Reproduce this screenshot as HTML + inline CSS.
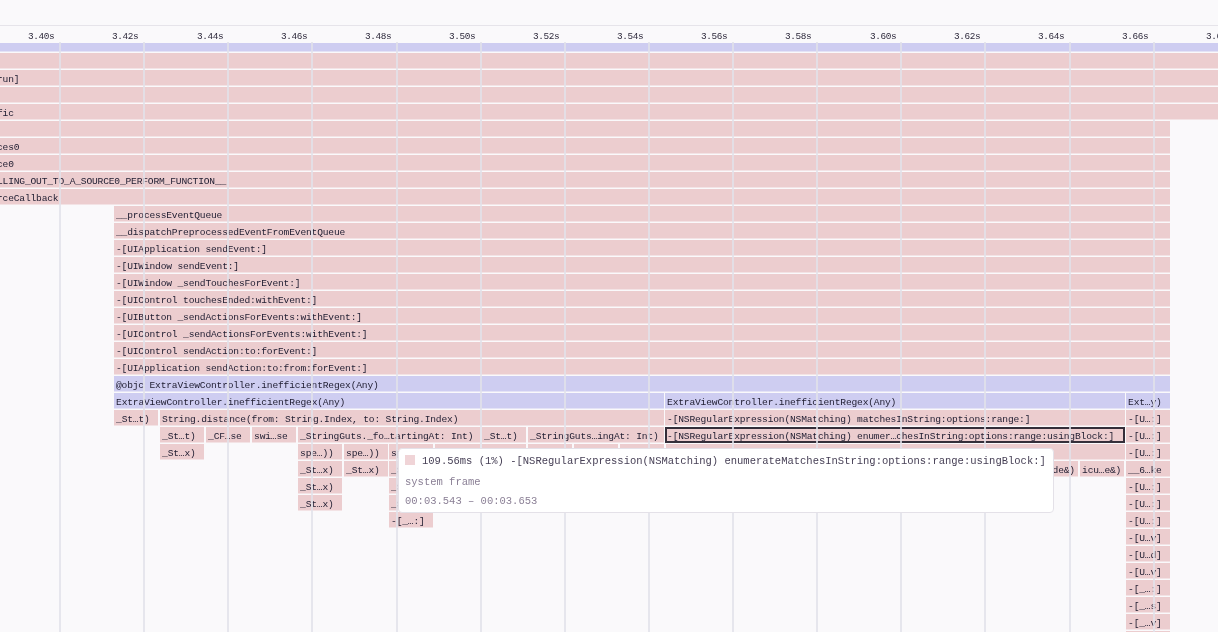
<!DOCTYPE html><html><head><meta charset="utf-8"><style>
*{margin:0;padding:0;box-sizing:border-box}
html,body{width:1218px;height:632px;overflow:hidden;background:#faf9fb}
body{position:relative;font-family:"Liberation Mono",monospace}
.bb{position:absolute;height:15px}
.b{position:absolute;height:15px;overflow:hidden;white-space:pre;font-size:9.6px;letter-spacing:-0.17px;line-height:15px;color:#1e1c30;z-index:6;will-change:transform}
.b span{position:absolute;top:1.5px;left:2.1px}
.p{background:rgb(236,205,207);box-shadow:0 1px 0 rgba(236,205,207,0.5)}
.bl{background:rgb(206,205,241);box-shadow:0 1px 0 rgba(206,205,241,0.5)}
.g{position:absolute;top:42px;height:590px;width:2px;background:rgba(226,226,233,0.82);z-index:7}
.ax{position:absolute;top:28.5px;height:16px;font-size:9.4px;letter-spacing:-0.4px;line-height:16px;color:#2f2b3d;white-space:pre;will-change:transform}
.t{position:absolute;z-index:6;will-change:transform;white-space:pre;font-size:9.6px;letter-spacing:-0.17px;line-height:15px;color:#1e1c30}
</style></head><body>
<div style="position:absolute;left:0;top:25px;width:1218px;height:1px;background:#e6e4ea"></div>
<div class="bb bl" style="left:-10px;top:43px;width:1238px;height:8px"></div>
<div class="bb p" style="left:-10px;top:53px;width:1238px;height:15px"></div>
<div class="bb p" style="left:-10px;top:70px;width:1238px;height:15px"></div>
<div class="bb p" style="left:-10px;top:87px;width:1238px;height:15px"></div>
<div class="bb p" style="left:-10px;top:104px;width:1238px;height:15px"></div>
<div class="bb p" style="left:-10px;top:121px;width:1180px;height:15px"></div>
<div class="bb p" style="left:-10px;top:138px;width:1180px;height:15px"></div>
<div class="bb p" style="left:-10px;top:155px;width:1180px;height:15px"></div>
<div class="bb p" style="left:-10px;top:172px;width:1180px;height:15px"></div>
<div class="bb p" style="left:-10px;top:189px;width:1180px;height:15px"></div>
<div class="bb p" style="left:114px;top:206px;width:1056px;height:15px"></div>
<div class="bb p" style="left:114px;top:223px;width:1056px;height:15px"></div>
<div class="bb p" style="left:114px;top:240px;width:1056px;height:15px"></div>
<div class="bb p" style="left:114px;top:257px;width:1056px;height:15px"></div>
<div class="bb p" style="left:114px;top:274px;width:1056px;height:15px"></div>
<div class="bb p" style="left:114px;top:291px;width:1056px;height:15px"></div>
<div class="bb p" style="left:114px;top:308px;width:1056px;height:15px"></div>
<div class="bb p" style="left:114px;top:325px;width:1056px;height:15px"></div>
<div class="bb p" style="left:114px;top:342px;width:1056px;height:15px"></div>
<div class="bb p" style="left:114px;top:359px;width:1056px;height:15px"></div>
<div class="bb bl" style="left:114px;top:376px;width:1056px;height:15px"></div>
<div class="bb bl" style="left:114px;top:393px;width:550px;height:15px"></div>
<div class="b" style="left:114px;top:393px;width:550px;height:15px"><span>ExtraViewController.inefficientRegex(Any)</span></div>
<div class="bb bl" style="left:665px;top:393px;width:459.5px;height:15px"></div>
<div class="b" style="left:665px;top:393px;width:459.5px;height:15px"><span>ExtraViewController.inefficientRegex(Any)</span></div>
<div class="bb bl" style="left:1126px;top:393px;width:44px;height:15px"></div>
<div class="b" style="left:1126px;top:393px;width:44px;height:15px"><span>Ext…y)</span></div>
<div class="bb p" style="left:114px;top:410px;width:43.69999999999999px;height:15px"></div>
<div class="b" style="left:114px;top:410px;width:43.69999999999999px;height:15px"><span>_St…t)</span></div>
<div class="bb p" style="left:159.9px;top:410px;width:504.1px;height:15px"></div>
<div class="b" style="left:159.9px;top:410px;width:504.1px;height:15px"><span>String.distance(from: String.Index, to: String.Index)</span></div>
<div class="bb p" style="left:665px;top:410px;width:459.5px;height:15px"></div>
<div class="b" style="left:665px;top:410px;width:459.5px;height:15px"><span>-[NSRegularExpression(NSMatching) matchesInString:options:range:]</span></div>
<div class="bb p" style="left:1126px;top:410px;width:44px;height:15px"></div>
<div class="b" style="left:1126px;top:410px;width:44px;height:15px"><span>-[U…:]</span></div>
<div class="bb p" style="left:159.9px;top:427px;width:43.79999999999998px;height:15px"></div>
<div class="b" style="left:159.9px;top:427px;width:43.79999999999998px;height:15px"><span>_St…t)</span></div>
<div class="bb p" style="left:205.7px;top:427px;width:44.0px;height:15px"></div>
<div class="b" style="left:205.7px;top:427px;width:44.0px;height:15px"><span>_CF…se</span></div>
<div class="bb p" style="left:251.6px;top:427px;width:44.00000000000003px;height:15px"></div>
<div class="b" style="left:251.6px;top:427px;width:44.00000000000003px;height:15px"><span>swi…se</span></div>
<div class="bb p" style="left:297.5px;top:427px;width:182.2px;height:15px"></div>
<div class="b" style="left:297.5px;top:427px;width:182.2px;height:15px"><span>_StringGuts._fo…tartingAt: Int)</span></div>
<div class="bb p" style="left:481.6px;top:427px;width:44.299999999999955px;height:15px"></div>
<div class="b" style="left:481.6px;top:427px;width:44.299999999999955px;height:15px"><span>_St…t)</span></div>
<div class="bb p" style="left:528.2px;top:427px;width:135.69999999999993px;height:15px"></div>
<div class="b" style="left:528.2px;top:427px;width:135.69999999999993px;height:15px"><span>_StringGuts…ingAt: Int)</span></div>
<div class="bb p" style="left:665px;top:427px;width:459.5px;height:15px"></div>
<div class="b" style="left:665px;top:427px;width:459.5px;height:15px"><span>-[NSRegularExpression(NSMatching) enumer…chesInString:options:range:usingBlock:]</span></div>
<div class="bb p" style="left:1126px;top:427px;width:44px;height:15px"></div>
<div class="b" style="left:1126px;top:427px;width:44px;height:15px"><span>-[U…:]</span></div>
<div class="bb p" style="left:159.9px;top:444px;width:43.79999999999998px;height:15px"></div>
<div class="b" style="left:159.9px;top:444px;width:43.79999999999998px;height:15px"><span>_St…x)</span></div>
<div class="bb p" style="left:297.5px;top:444px;width:44.10000000000002px;height:15px"></div>
<div class="b" style="left:297.5px;top:444px;width:44.10000000000002px;height:15px"><span>spe…))</span></div>
<div class="bb p" style="left:343.5px;top:444px;width:44.10000000000002px;height:15px"></div>
<div class="b" style="left:343.5px;top:444px;width:44.10000000000002px;height:15px"><span>spe…))</span></div>
<div class="bb p" style="left:389.2px;top:444px;width:44.19999999999999px;height:15px"></div>
<div class="b" style="left:389.2px;top:444px;width:44.19999999999999px;height:15px"><span>spe…))</span></div>
<div class="bb p" style="left:435.3px;top:444px;width:44.69999999999999px;height:15px"></div>
<div class="bb p" style="left:482px;top:444px;width:44px;height:15px"></div>
<div class="bb p" style="left:528px;top:444px;width:44px;height:15px"></div>
<div class="bb p" style="left:574px;top:444px;width:44px;height:15px"></div>
<div class="bb p" style="left:620px;top:444px;width:44px;height:15px"></div>
<div class="bb p" style="left:666px;top:444px;width:458.5px;height:15px"></div>
<div class="bb p" style="left:1126px;top:444px;width:44px;height:15px"></div>
<div class="b" style="left:1126px;top:444px;width:44px;height:15px"><span>-[U…:]</span></div>
<div class="bb p" style="left:297.5px;top:461px;width:44.10000000000002px;height:15px"></div>
<div class="b" style="left:297.5px;top:461px;width:44.10000000000002px;height:15px"><span>_St…x)</span></div>
<div class="bb p" style="left:343.5px;top:461px;width:44.10000000000002px;height:15px"></div>
<div class="b" style="left:343.5px;top:461px;width:44.10000000000002px;height:15px"><span>_St…x)</span></div>
<div class="bb p" style="left:389.2px;top:461px;width:44.19999999999999px;height:15px"></div>
<div class="b" style="left:389.2px;top:461px;width:44.19999999999999px;height:15px"><span>_St…x)</span></div>
<div class="bb p" style="left:1000px;top:461px;width:77.79999999999995px;height:15px"></div>
<div class="bb p" style="left:1080.2px;top:461px;width:44.299999999999955px;height:15px"></div>
<div class="b" style="left:1080.2px;top:461px;width:44.299999999999955px;height:15px"><span>icu…e&amp;)</span></div>
<div class="bb p" style="left:1126px;top:461px;width:44px;height:15px"></div>
<div class="b" style="left:1126px;top:461px;width:44px;height:15px"><span>__6…ke</span></div>
<div class="bb p" style="left:297.5px;top:478px;width:44.10000000000002px;height:15px"></div>
<div class="b" style="left:297.5px;top:478px;width:44.10000000000002px;height:15px"><span>_St…x)</span></div>
<div class="bb p" style="left:389.2px;top:478px;width:44.19999999999999px;height:15px"></div>
<div class="b" style="left:389.2px;top:478px;width:44.19999999999999px;height:15px"><span>_St…x)</span></div>
<div class="bb p" style="left:1126px;top:478px;width:44px;height:15px"></div>
<div class="b" style="left:1126px;top:478px;width:44px;height:15px"><span>-[U…:]</span></div>
<div class="bb p" style="left:297.5px;top:495px;width:44.10000000000002px;height:15px"></div>
<div class="b" style="left:297.5px;top:495px;width:44.10000000000002px;height:15px"><span>_St…x)</span></div>
<div class="bb p" style="left:389.2px;top:495px;width:44.19999999999999px;height:15px"></div>
<div class="b" style="left:389.2px;top:495px;width:44.19999999999999px;height:15px"><span>_St…x)</span></div>
<div class="bb p" style="left:1126px;top:495px;width:44px;height:15px"></div>
<div class="b" style="left:1126px;top:495px;width:44px;height:15px"><span>-[U…:]</span></div>
<div class="bb p" style="left:389.2px;top:512px;width:44.19999999999999px;height:15px"></div>
<div class="b" style="left:389.2px;top:512px;width:44.19999999999999px;height:15px"><span>-[_…:]</span></div>
<div class="bb p" style="left:1126px;top:512px;width:44px;height:15px"></div>
<div class="b" style="left:1126px;top:512px;width:44px;height:15px"><span>-[U…:]</span></div>
<div class="bb p" style="left:1126px;top:529px;width:44px;height:15px"></div>
<div class="b" style="left:1126px;top:529px;width:44px;height:15px"><span>-[U…v]</span></div>
<div class="bb p" style="left:1126px;top:546px;width:44px;height:15px"></div>
<div class="b" style="left:1126px;top:546px;width:44px;height:15px"><span>-[U…d]</span></div>
<div class="bb p" style="left:1126px;top:563px;width:44px;height:15px"></div>
<div class="b" style="left:1126px;top:563px;width:44px;height:15px"><span>-[U…v]</span></div>
<div class="bb p" style="left:1126px;top:580px;width:44px;height:15px"></div>
<div class="b" style="left:1126px;top:580px;width:44px;height:15px"><span>-[_…:]</span></div>
<div class="bb p" style="left:1126px;top:597px;width:44px;height:15px"></div>
<div class="b" style="left:1126px;top:597px;width:44px;height:15px"><span>-[_…s]</span></div>
<div class="bb p" style="left:1126px;top:614px;width:44px;height:15px"></div>
<div class="b" style="left:1126px;top:614px;width:44px;height:15px"><span>-[_…v]</span></div>
<div class="bb p" style="left:1126px;top:631px;width:44px;height:15px"></div>
<div class="b" style="left:1126px;top:631px;width:44px;height:15px"><span>-[_…:]</span></div>
<div class="t" style="left:116.1px;top:207.5px">__processEventQueue</div>
<div class="t" style="left:116.1px;top:224.5px">__dispatchPreprocessedEventFromEventQueue</div>
<div class="t" style="left:116.1px;top:241.5px">-[UIApplication sendEvent:]</div>
<div class="t" style="left:116.1px;top:258.5px">-[UIWindow sendEvent:]</div>
<div class="t" style="left:116.1px;top:275.5px">-[UIWindow _sendTouchesForEvent:]</div>
<div class="t" style="left:116.1px;top:292.5px">-[UIControl touchesEnded:withEvent:]</div>
<div class="t" style="left:116.1px;top:309.5px">-[UIButton _sendActionsForEvents:withEvent:]</div>
<div class="t" style="left:116.1px;top:326.5px">-[UIControl _sendActionsForEvents:withEvent:]</div>
<div class="t" style="left:116.1px;top:343.5px">-[UIControl sendAction:to:forEvent:]</div>
<div class="t" style="left:116.1px;top:360.5px">-[UIApplication sendAction:to:from:forEvent:]</div>
<div class="t" style="left:116.1px;top:377.5px">@objc ExtraViewController.inefficientRegex(Any)</div>
<div class="t" style="right:1199.0px;top:71.5px">run]</div>
<div class="t" style="right:1204.0px;top:105.5px">fic</div>
<div class="t" style="right:1198.4px;top:139.5px">ces0</div>
<div class="t" style="right:1204.0px;top:156.5px">ce0</div>
<div class="t" style="left:-3px;top:173.5px">LLING_OUT_TO_A_SOURCE0_PERFORM_FUNCTION__</div>
<div class="t" style="right:1159.5px;top:190.5px">rceCallback</div>
<div class="t" style="right:143.5px;top:462.5px">_de&amp;)</div>
<div class="g" style="left:59px"></div>
<div class="ax" style="right:1163.60px">3.40s</div>
<div class="g" style="left:143px"></div>
<div class="ax" style="right:1079.47px">3.42s</div>
<div class="g" style="left:227px"></div>
<div class="ax" style="right:995.34px">3.44s</div>
<div class="g" style="left:311px"></div>
<div class="ax" style="right:911.21px">3.46s</div>
<div class="g" style="left:396px"></div>
<div class="ax" style="right:827.08px">3.48s</div>
<div class="g" style="left:480px"></div>
<div class="ax" style="right:742.95px">3.50s</div>
<div class="g" style="left:564px"></div>
<div class="ax" style="right:658.82px">3.52s</div>
<div class="g" style="left:648px"></div>
<div class="ax" style="right:574.69px">3.54s</div>
<div class="g" style="left:732px"></div>
<div class="ax" style="right:490.56px">3.56s</div>
<div class="g" style="left:816px"></div>
<div class="ax" style="right:406.43px">3.58s</div>
<div class="g" style="left:900px"></div>
<div class="ax" style="right:322.30px">3.60s</div>
<div class="g" style="left:984px"></div>
<div class="ax" style="right:238.17px">3.62s</div>
<div class="g" style="left:1069px"></div>
<div class="ax" style="right:154.04px">3.64s</div>
<div class="g" style="left:1153px"></div>
<div class="ax" style="right:69.91px">3.66s</div>
<div class="ax" style="right:-14.22px">3.68s</div>
<div style="position:absolute;left:665px;top:427px;width:460px;height:16px;border:2px solid rgba(20,18,30,0.85);z-index:4"></div>
<div style="position:absolute;left:398px;top:448px;width:656px;height:65px;background:#fff;border:1px solid #e4e1e8;border-radius:4px;z-index:10;will-change:transform">
<div style="position:absolute;left:6px;top:5.5px;width:10px;height:10px;background:rgb(240,212,215)"></div>
<div style="position:absolute;left:23px;top:4px;font-size:10.5px;line-height:16px;color:#463f55;white-space:pre">109.56ms (1%) -[NSRegularExpression(NSMatching) enumerateMatchesInString:options:range:usingBlock:]</div>
<div style="position:absolute;left:6px;top:24.5px;font-size:10.5px;line-height:16px;color:#8a7f95;white-space:pre">system frame</div>
<div style="position:absolute;left:6px;top:44px;font-size:10.5px;line-height:16px;color:#8a7f95;white-space:pre">00:03.543 – 00:03.653</div>
</div>
</body></html>
